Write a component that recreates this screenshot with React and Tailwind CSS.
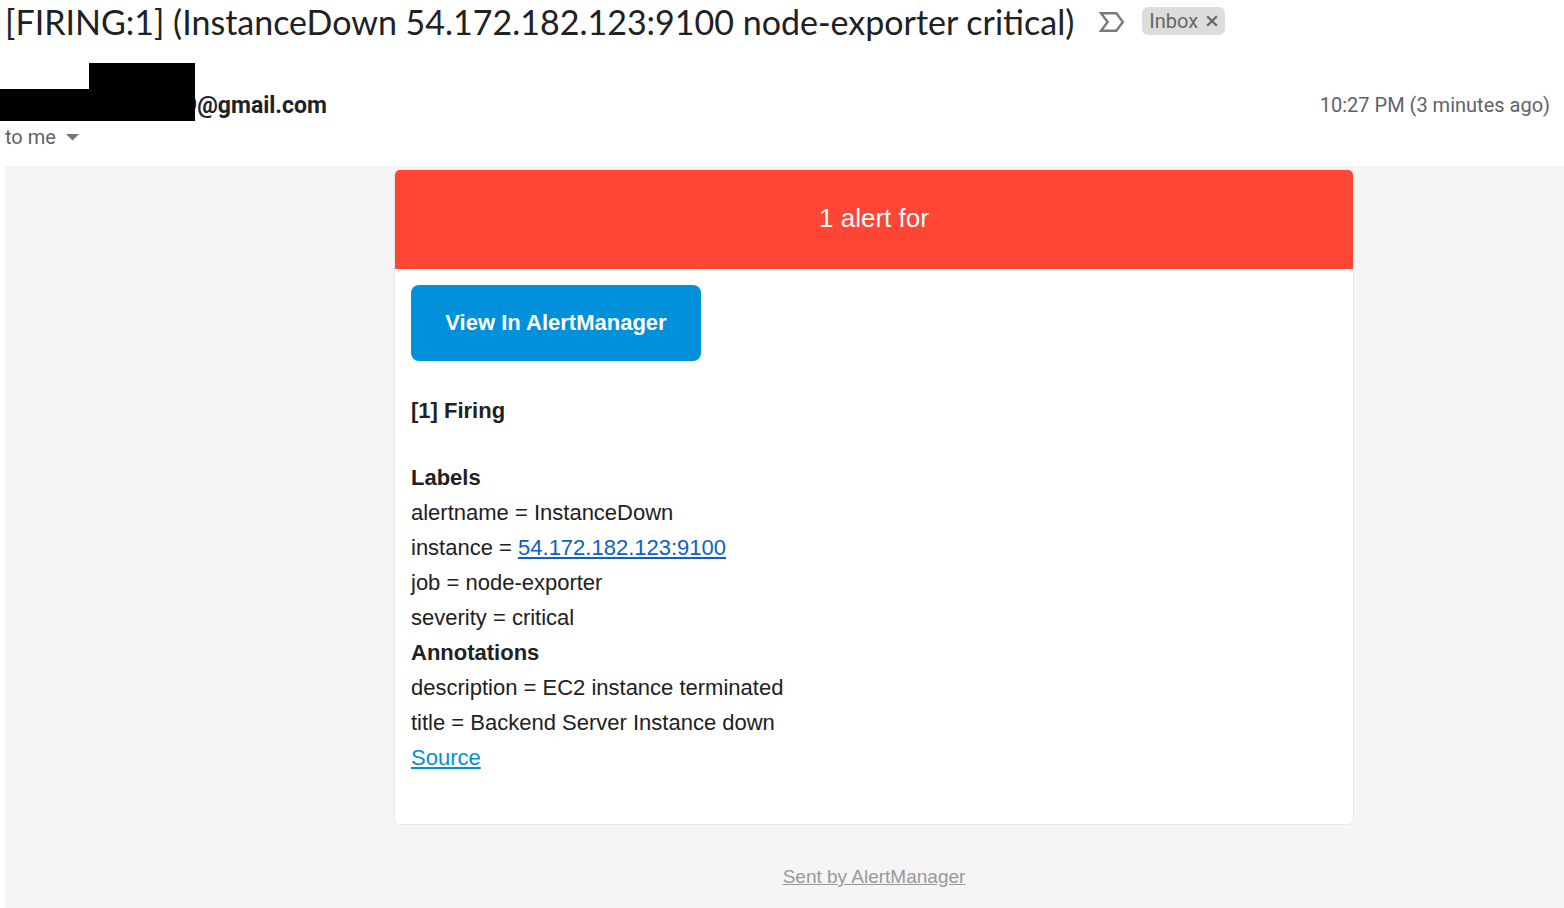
const labels = [
  { name: "alertname", value: "InstanceDown" },
  { name: "instance", value: "54.172.182.123:9100", href: "http://54.172.182.123:9100" },
  { name: "job", value: "node-exporter" },
  { name: "severity", value: "critical" },
];

const annotations = [
  { name: "description", value: "EC2 instance terminated" },
  { name: "title", value: "Backend Server Instance down" },
];

function ImportanceMarker() {
  return (
    <svg width="28" height="24" viewBox="0 0 28 24" fill="none" aria-hidden="true">
      <path
        d="M3.1 3.3H18.3L24.9 12L18.3 20.7H3.1L9.6 12Z"
        stroke="#7a7a7a"
        strokeWidth="2.4"
      />
    </svg>
  );
}

function Fields({ heading, items }) {
  return (
    <section>
      <h3 className="font-bold">{heading}</h3>
      {items.map((item) => (
        <p key={item.name}>
          {item.name} ={" "}
          {item.href ? (
            <a href={item.href} className="text-[#0b60c9] underline">
              {item.value}
            </a>
          ) : (
            item.value
          )}
        </p>
      ))}
    </section>
  );
}

function Subject() {
  return (
    <div className="flex h-[63px] items-start pl-[5px]">
      <h1 className="font-['Lato','Roboto',sans-serif] text-[34px] leading-[44px] whitespace-nowrap text-[#202124]">
        [FIRING:1] (InstanceDown 54.172.182.123:9100 node-exporter critical)
      </h1>
      <button type="button" aria-label="Importance" className="mt-[10px] ml-6 shrink-0">
        <ImportanceMarker />
      </button>
      <div className="mt-[7px] ml-4 flex h-7 shrink-0 items-center gap-2 rounded-md bg-[#ddd] px-[7px] text-[20px] text-[#666]">
        <span>Inbox</span>
        <button type="button" aria-label="Remove label Inbox">
          <svg width="12" height="12" viewBox="0 0 12 12" aria-hidden="true">
            <path d="M1.2 1.2L10.8 10.8M10.8 1.2L1.2 10.8" stroke="#666" strokeWidth="2.3" />
          </svg>
        </button>
      </div>
    </div>
  );
}

function Sender() {
  return (
    <div className="flex items-start">
      <div className="relative z-10 flex w-[195px] shrink-0 flex-col items-end">
        <div className="h-[26px] w-[106px] bg-black" />
        <div className="h-8 w-full bg-black" />
      </div>
      <div className="-ml-[11px] pt-[29px] text-[23px] leading-7 font-bold text-[#202124]">
        9@gmail.com
      </div>
      <time className="mt-7 mr-[14px] ml-auto text-[20px] leading-7 text-[#5f6368]">
        10:27 PM (3 minutes ago)
      </time>
    </div>
  );
}

export default function App() {
  return (
    <main className="flex min-h-screen flex-col bg-white font-['Roboto',sans-serif]">
      <Subject />
      <Sender />
      <div className="flex h-[45px] items-start pl-[5px]">
        <button
          type="button"
          className="mt-[2px] flex items-center gap-[10px] text-[20px] leading-7 text-[#5f6368]"
        >
          to me
          <svg width="13" height="7" viewBox="0 0 13 7" aria-hidden="true">
            <path d="M0 0H13L6.5 6.5Z" fill="#737373" />
          </svg>
        </button>
      </div>

      <div className="ml-[5px] flex grow flex-col items-center bg-[#f5f5f5] pt-[3px] pl-[179px] font-['Liberation_Sans',Arial,sans-serif] text-[#212121]">
        <article className="w-full max-w-[960px] overflow-hidden rounded-md border border-[#e9e9e9] bg-white">
          <h2 className="bg-[#ff4534] pt-[31px] pb-[33px] text-center text-[26px] leading-[35px] text-white">
            1 alert for
          </h2>
          <div className="px-4 pt-4 pb-[49px] text-[22px] leading-[35px]">
            <a
              href="#alertmanager"
              className="flex h-[76px] w-[290px] items-center justify-center rounded-lg bg-[#0091da] pb-[2px] font-bold text-white"
            >
              View In AlertManager
            </a>
            <p className="mt-8 mb-8 font-bold">[1] Firing</p>
            <Fields heading="Labels" items={labels} />
            <Fields heading="Annotations" items={annotations} />
            <a href="#source" className="text-[#0091da] underline">
              Source
            </a>
          </div>
        </article>
        <a href="#sent-by" className="mt-[37px] text-[19px] leading-[30px] text-[#999] underline">
          Sent by AlertManager
        </a>
      </div>
    </main>
  );
}
